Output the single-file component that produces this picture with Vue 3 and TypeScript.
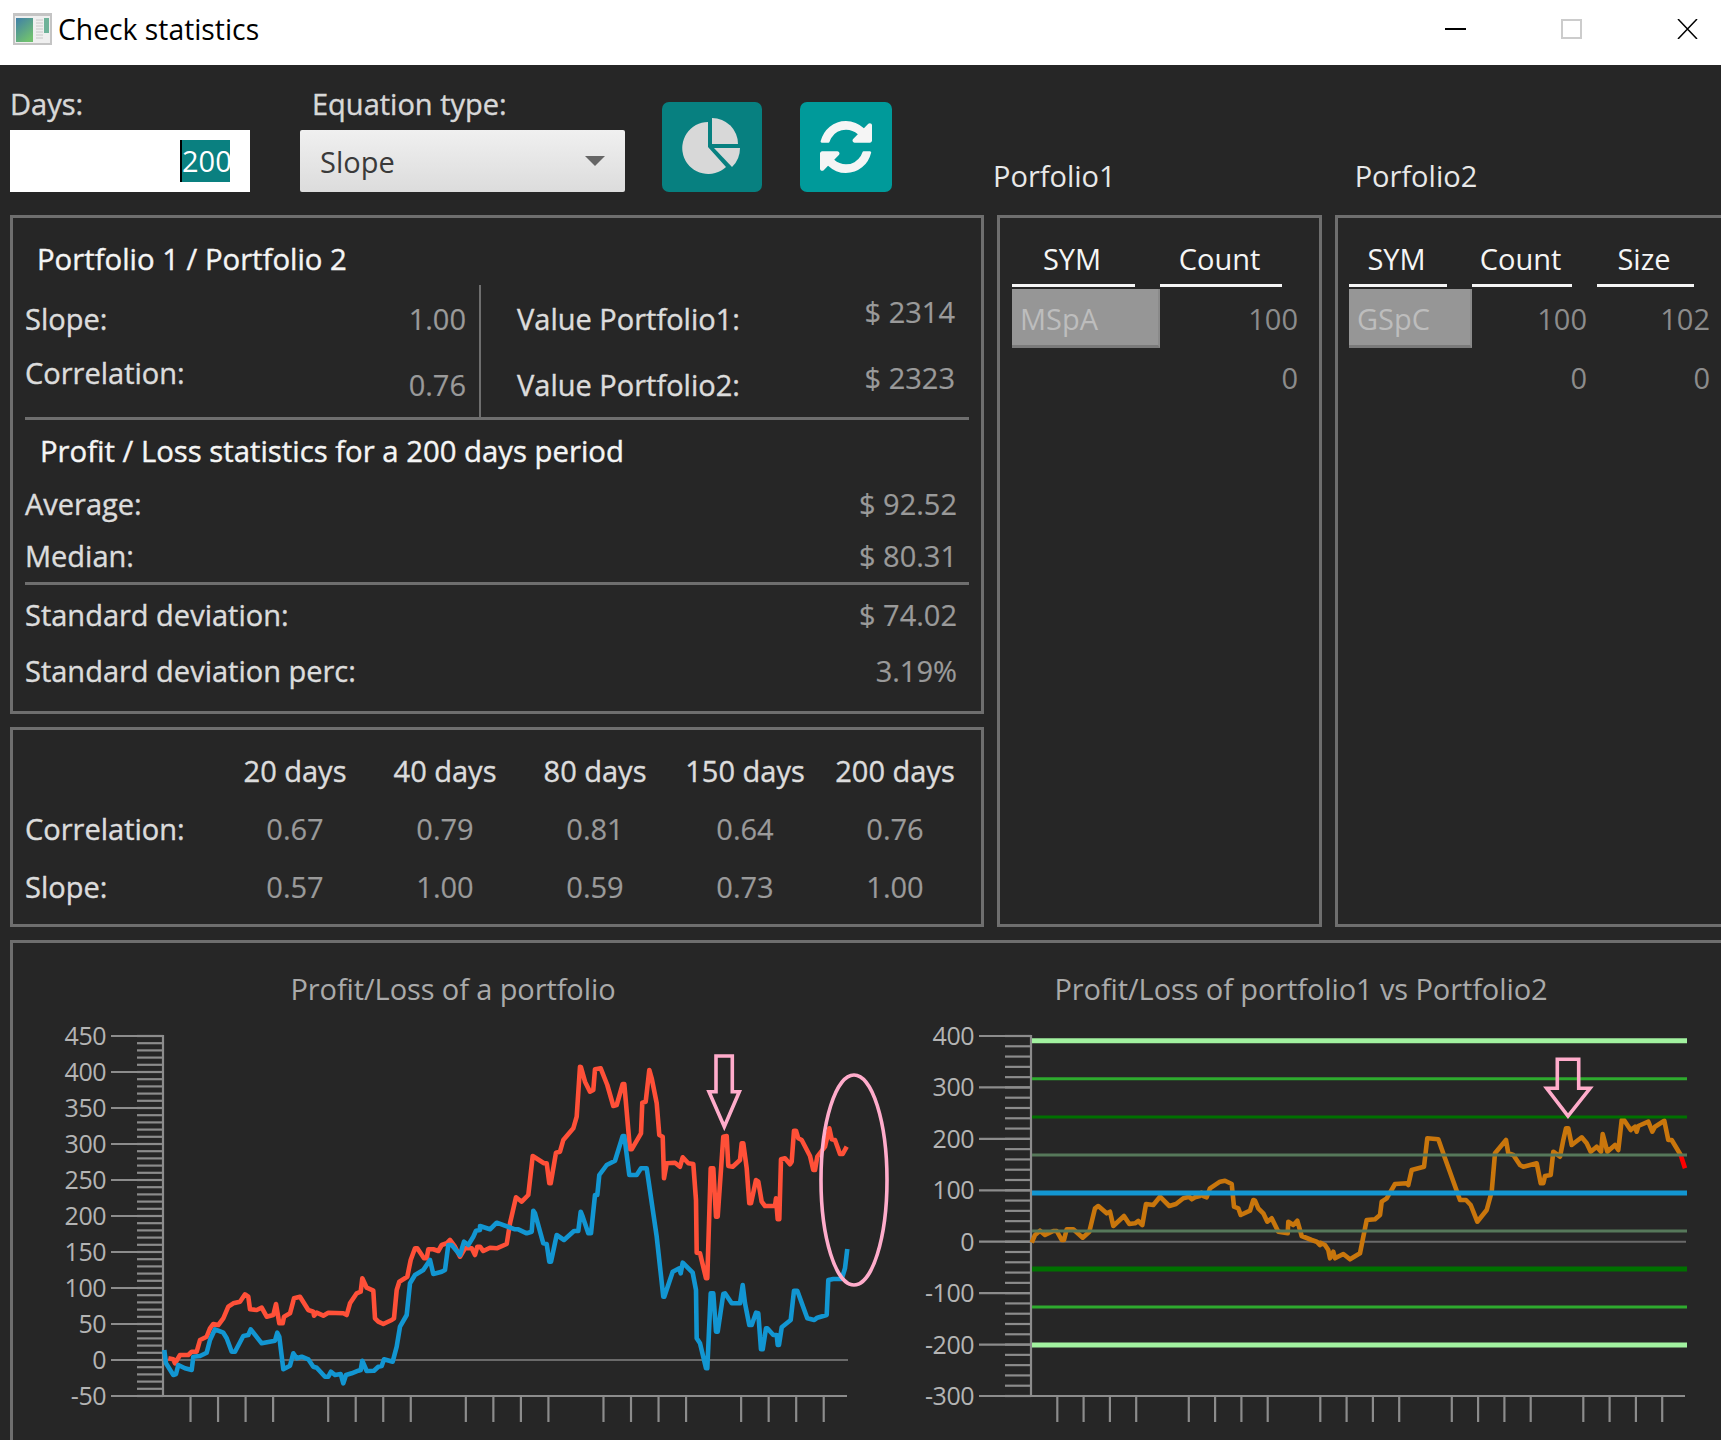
<script setup lang="ts">
type Pt = [number, number]

const z = (pts: Pt[], ox: number, oy = 950): Pt[] => pts.map(([x, y]) => [x / 3 + ox, y / 3 + oy] as Pt)
const d = (pts: Pt[]): string => pts.map(([x, y]) => `${x.toFixed(1)},${y.toFixed(1)}`).join(' ')

const redA: Pt[] = [[505,1225],[520,1228],[525,1240],[540,1215],[565,1215],[575,1205],[590,1205],[600,1170],[620,1160],[630,1135],[640,1122],[655,1125],[670,1105],[685,1070],[700,1060],[720,1055],[735,1033],[745,1040],[750,1078],[770,1080],[785,1073],[800,1100],[820,1095],[828,1062],[838,1120],[848,1120],[852,1100],[870,1090],[882,1045],[900,1040],[925,1080],[940,1085],[942,1097],[950,1088],[970,1097],[985,1088],[1030,1090],[1040,1095],[1050,1060],[1070,1030],[1082,1025],[1087,985],[1100,1013],[1120,1022],[1125,1105],[1135,1115],[1150,1122],[1175,1110],[1182,1105],[1190,1020],[1198,995],[1222,980],[1232,930],[1245,895],[1252,895],[1272,925],[1280,925],[1285,898],[1300,898],[1315,903],[1325,885],[1340,880],[1350,870],[1365,890],[1380,920],[1395,895],[1415,895],[1425,915],[1432,890],[1440,890]]
const redB: Pt[] = [[0,890],[10,903],[30,893],[50,895],[80,882],[90,820],[108,742],[125,755],[145,735],[158,618],[192,640],[200,640],[208,700],[212,700],[228,608],[240,605],[250,570],[280,535],[290,500],[300,350],[303,352],[315,395],[330,425],[340,420],[345,358],[362,355],[382,405],[400,468],[410,465],[428,402],[433,402],[450,598],[455,598],[483,550],[487,458],[497,455],[508,360],[515,385],[530,460],[538,555],[548,560],[552,685],[560,640],[585,638],[600,650],[608,622],[625,640],[640,642],[648,750],[650,908],[660,910],[678,985],[682,985],[692,655],[700,655],[708,800],[713,800],[730,560],[740,558],[745,648],[758,650],[780,630],[785,580],[790,580],[800,655],[808,760],[813,760],[828,690],[835,695],[845,755],[855,768],[885,768],[888,745],[893,808],[898,808],[903,628],[915,625],[930,643],[935,635],[942,542],[948,542],[955,565],[965,570],[990,618],[1000,660],[1005,660],[1012,620],[1035,590],[1048,535],[1055,568],[1065,570],[1080,612],[1088,612],[1100,590]]
const blueA: Pt[] = [[493,1200],[498,1240],[520,1275],[528,1272],[535,1245],[555,1255],[575,1260],[580,1220],[600,1218],[620,1208],[630,1170],[645,1138],[670,1148],[680,1165],[695,1205],[705,1205],[730,1158],[745,1155],[752,1138],[785,1180],[825,1172],[832,1148],[838,1160],[850,1258],[870,1247],[880,1210],[890,1225],[905,1220],[925,1228],[940,1250],[950,1253],[975,1280],[985,1280],[993,1265],[1005,1275],[1022,1272],[1030,1300],[1038,1275],[1055,1270],[1075,1262],[1082,1260],[1087,1232],[1100,1263],[1122,1262],[1135,1250],[1145,1248],[1152,1228],[1178,1235],[1190,1190],[1200,1130],[1220,1095],[1230,1000],[1245,975],[1270,960],[1290,930],[1300,972],[1325,965],[1335,960],[1345,885],[1355,885],[1380,915],[1392,875],[1405,885],[1420,860],[1428,842],[1440,840]]
const blueB: Pt[] = [[0,828],[30,838],[50,818],[105,838],[115,838],[140,850],[155,845],[160,782],[165,790],[190,880],[200,882],[208,935],[213,935],[230,855],[252,870],[282,843],[295,843],[302,785],[308,800],[325,850],[333,850],[345,735],[352,735],[358,675],[380,645],[405,632],[428,558],[433,558],[448,675],[470,675],[483,655],[500,655],[530,860],[550,1040],[553,1040],[578,965],[598,955],[602,970],[608,938],[638,968],[648,1020],[650,1165],[660,1180],[678,1255],[682,1255],[692,1030],[700,1030],[708,1145],[713,1145],[730,1032],[735,1030],[755,1060],[780,1060],[788,1005],[795,1060],[808,1125],[815,1125],[828,1088],[835,1090],[843,1198],[848,1198],[858,1135],[862,1135],[880,1155],[890,1155],[893,1185],[897,1185],[905,1132],[932,1110],[942,1022],[952,1022],[982,1105],[1003,1110],[1012,1103],[1040,1095],[1045,990],[1060,987],[1085,987],[1095,955],[1102,897]]
const orangeA: Pt[] = [[335,878],[345,855],[360,842],[375,855],[400,843],[410,843],[425,870],[432,870],[440,838],[460,838],[488,863],[508,845],[525,775],[535,768],[560,790],[570,785],[580,828],[612,798],[628,822],[645,820],[655,813],[667,825],[678,762],[700,765],[720,740],[748,768],[768,762],[790,745],[808,740],[815,748],[825,742],[840,738],[845,728],[850,738],[860,742],[870,715],[900,695],[915,692],[935,702],[942,770],[955,775],[962,795],[990,782],[1000,750],[1005,752],[1015,775],[1030,790],[1042,815],[1055,805],[1075,845],[1103,850],[1105,815],[1120,825],[1132,812],[1145,858],[1175,870],[1190,875],[1200,885]]
const orangeB: Pt[] = [[0,878],[15,885],[25,900],[30,925],[40,905],[45,925],[70,912],[90,928],[120,910],[140,810],[165,808],[180,795],[185,755],[200,745],[225,702],[260,700],[265,705],[275,660],[312,650],[322,565],[355,568],[375,625],[420,750],[438,750],[452,765],[472,815],[500,780],[515,725],[525,610],[558,570],[565,610],[580,615],[600,645],[610,650],[650,640],[662,700],[670,700],[675,678],[692,675],[700,605],[720,620],[730,570],[738,535],[745,535],[755,585],[785,562],[800,580],[812,605],[830,590],[843,605],[848,552],[862,605],[885,585],[895,600],[905,510],[912,510],[932,540],[945,530],[950,545],[955,528],[985,515],[997,545],[1005,530],[1033,512],[1045,570],[1055,570],[1082,615]]

const redLine = d([...z(redA, 0), ...z(redB, 480)])
const blueLine = d([...z(blueA, 0), ...z(blueB, 480)])
const orangeLine = d([...z(orangeA, 920), ...z(orangeB, 1320)])
const redTail = d(z([[1082, 615], [1095, 655]], 1320))
const arrowLeft = d(z([[708,318],[757,318],[757,425],[778,425],[733,530],[687,425],[708,425]], 480))
const arrowRight = d(z([[712,328],[776,328],[776,415],[810,415],[744,498],[680,415],[712,415]], 1320))

interface Axis { x: number; from: number; to: number; min: number; max: number; step: number; minors: number; xStep: number; end: number; labelX: number; zero: number }
const leftAxis: Axis = { x: 163, from: 1036, to: 1396, min: -50, max: 450, step: 50, minors: 50, xStep: 27.53, end: 847, labelX: 106, zero: 848 }
const rightAxis: Axis = { x: 1031, from: 1036, to: 1396, min: -300, max: 400, step: 100, minors: 35, xStep: 26.3, end: 1685, labelX: 974, zero: 1686 }

const yOf = (a: Axis, v: number): number => a.from + ((a.max - v) / (a.max - a.min)) * (a.to - a.from)
const majors = (a: Axis) => {
  const out: { v: number; y: number }[] = []
  for (let v = a.max; v >= a.min; v -= a.step) out.push({ v, y: yOf(a, v) })
  return out
}
const minorTicks = (a: Axis): number[] =>
  Array.from({ length: a.minors + 1 }, (_, i) => a.from + (i * (a.to - a.from)) / a.minors)
const xTicks = (a: Axis): number[] => {
  const out: number[] = []
  for (let k = 1; k <= 24; k++) if (k % 5 !== 0) out.push(a.x + k * a.xStep)
  return out
}
const axes = [leftAxis, rightAxis]

const bands = [
  { y: 1040.7, w: 5, c: '#a2f2a0' },
  { y: 1078.7, w: 3, c: '#2eaa2e' },
  { y: 1117, w: 3, c: '#007000' },
  { y: 1155, w: 3, c: '#56785a' },
  { y: 1231, w: 3, c: '#56785a' },
  { y: 1269, w: 5, c: '#007000' },
  { y: 1307, w: 3, c: '#2eaa2e' },
  { y: 1345, w: 5, c: '#a2f2a0' },
  { y: 1193, w: 5, c: '#1296d2' }
]

const periods = [
  { title: '20 days', corr: '0.67', slope: '0.57' },
  { title: '40 days', corr: '0.79', slope: '1.00' },
  { title: '80 days', corr: '0.81', slope: '0.59' },
  { title: '150 days', corr: '0.64', slope: '0.73' },
  { title: '200 days', corr: '0.76', slope: '1.00' }
]
</script>

<template>
  <div class="window">
    <header class="titlebar">
      <svg class="appicon" viewBox="0 0 39 32">
        <defs>
          <linearGradient id="appg" x1="0" y1="0" x2="0.6" y2="1">
            <stop offset="0" stop-color="#3f7fa8" />
            <stop offset="1" stop-color="#70c070" />
          </linearGradient>
        </defs>
        <rect x="0" y="0" width="39" height="32" fill="#c4c4c4" />
        <rect x="2" y="3" width="35" height="27" fill="#efefef" />
        <rect x="3" y="5" width="17" height="24" fill="url(#appg)" />
        <rect x="31" y="5" width="5" height="15" fill="#6fb39a" />
        <path d="M23 7h7M23 10h7M23 13h7M23 16h7M23 19h7M23 22h7M23 25h7" stroke="#c8c8c8" stroke-width="1" />
      </svg>
      <span class="apptitle">Check statistics</span>
      <div class="winctl">
        <svg class="ctl" viewBox="0 0 21 20"><path d="M0 10h21" stroke="#000" stroke-width="2" /></svg>
        <svg class="ctl" viewBox="0 0 21 20"><rect x="1" y="1" width="19" height="18" fill="none" stroke="#ccc" stroke-width="2" /></svg>
        <svg class="ctl" viewBox="0 0 21 20"><path d="M1 0l19 20M20 0L1 20" stroke="#000" stroke-width="1.5" fill="none" /></svg>
      </div>
    </header>

    <main class="body">
      <section class="toolbar">
        <div class="field days">
          <label class="flabel">Days:</label>
          <div class="input"><span class="sel">200</span></div>
        </div>
        <div class="field eq">
          <label class="flabel eqlabel">Equation type:</label>
          <div class="combo"><span>Slope</span><i class="caret"></i></div>
        </div>
        <button class="btn btn1" type="button" aria-label="Chart">
          <svg viewBox="0 0 100 90" width="100" height="90">
            <g fill="#d8d8d8">
              <path d="M46 20A26 26 0 1 0 64 65L46 45Z" />
              <path d="M50 16A26 26 0 0 1 76 42L50 42Z" />
              <path d="M52 46L78 46A26 26 0 0 1 70 65Z" />
            </g>
          </svg>
        </button>
        <button class="btn btn2" type="button" aria-label="Refresh">
          <svg viewBox="0 -1408 1536 1536" width="52" height="52">
            <path transform="scale(1,-1)" fill="#f5f5f5" d="M1511 480q0 -5 -1 -7q-64 -268 -268 -434.5t-478 -166.5q-146 0 -282.5 55t-243.5 157l-129 -129q-19 -19 -45 -19t-45 19t-19 45v448q0 26 19 45t45 19h448q26 0 45 -19t19 -45t-19 -45l-137 -137q71 -66 161 -102t187 -36q134 0 250 65t186 179q11 17 53 117q8 23 30 23h192q13 0 22.5 -9.5t9.5 -22.5zM1536 1280v-448q0 -26 -19 -45t-45 -19h-448q-26 0 -45 19t-19 45t19 45l138 138q-148 137 -349 137q-134 0 -250 -65t-186 -179q-11 -17 -53 -117q-8 -23 -30 -23h-199q-13 0 -22.5 9.5t-9.5 22.5v7q65 268 270 434.5t480 166.5q146 0 284 -55.5t245 -156.5l130 129q19 19 45 19t45 -19t19 -45z" />
          </svg>
        </button>
        <span class="pname p1name">Porfolio1</span>
        <span class="pname p2name">Porfolio2</span>
      </section>

      <section class="mid">
        <div class="leftcol">
          <div class="panel stats">
            <div class="h h1">Portfolio 1 / Portfolio 2</div>
            <div class="pair">
              <div class="row cellL"><span class="lab">Slope:</span><span class="val">1.00</span></div>
              <div class="row cellR"><span class="lab">Value Portfolio1:</span><span class="val up7">$ 2314</span></div>
              <div class="row cellL"><span class="lab up12">Correlation:</span><span class="val">0.76</span></div>
              <div class="row cellR"><span class="lab">Value Portfolio2:</span><span class="val up7">$ 2323</span></div>
            </div>
            <hr class="rule" />
            <div class="h h2">Profit / Loss statistics for a 200 days period</div>
            <div class="row wide r52"><span class="lab">Average:</span><span class="val">$ 92.52</span></div>
            <div class="row wide r53"><span class="lab">Median:</span><span class="val">$ 80.31</span></div>
            <hr class="rule" />
            <div class="row wide r58"><span class="lab">Standard deviation:</span><span class="val">$ 74.02</span></div>
            <div class="row wide r54"><span class="lab">Standard deviation perc:</span><span class="val">3.19%</span></div>
          </div>
          <div class="panel periods">
            <span></span>
            <span v-for="p in periods" :key="p.title" class="ph">{{ p.title }}</span>
            <span class="lab">Correlation:</span>
            <span v-for="p in periods" :key="p.title + 'c'" class="pv">{{ p.corr }}</span>
            <span class="lab">Slope:</span>
            <span v-for="p in periods" :key="p.title + 's'" class="pv">{{ p.slope }}</span>
          </div>
        </div>

        <div class="panel tbl tbl1">
          <span class="th">SYM</span><span class="th short">Count</span>
          <span class="cellsel">MSpA</span><span class="td">100</span>
          <span></span><span class="td">0</span>
        </div>

        <div class="panel tbl tbl2">
          <span class="th">SYM</span><span class="th">Count</span><span class="th short">Size</span>
          <span class="cellsel">GSpC</span><span class="td inset">100</span><span class="td">102</span>
          <span></span><span class="td inset">0</span><span class="td">0</span>
        </div>
      </section>

      <section class="panel charts">
        <svg class="chartsvg" viewBox="13 943 1708 497" width="1708" height="497">
          <text class="ctitle" x="453" y="1000" text-anchor="middle">Profit/Loss of a portfolio</text>
          <text class="ctitle" x="1301" y="1000" text-anchor="middle">Profit/Loss of portfolio1 vs Portfolio2</text>

          <g v-for="a in axes" :key="a.x">
            <line :x1="a.x" :x2="a.zero" :y1="yOf(a, 0)" :y2="yOf(a, 0)" stroke="#6a6a6a" stroke-width="2" />
            <line v-for="y in minorTicks(a)" :key="y" :x1="a.x - 26" :x2="a.x" :y1="y" :y2="y" stroke="#8c8c8c" stroke-width="2.2" />
            <g v-for="m in majors(a)" :key="m.v">
              <line :x1="a.x - 52" :x2="a.x" :y1="m.y" :y2="m.y" stroke="#8c8c8c" stroke-width="2.2" />
              <text class="tick" :x="a.labelX" :y="m.y + 9" text-anchor="end">{{ m.v }}</text>
            </g>
            <line :x1="a.x" :x2="a.x" :y1="a.from - 1" :y2="a.to + 1" stroke="#8c8c8c" stroke-width="2.2" />
            <line :x1="a.x" :x2="a.end" :y1="a.to" :y2="a.to" stroke="#8c8c8c" stroke-width="2.2" />
            <line v-for="x in xTicks(a)" :key="x" :x1="x" :x2="x" :y1="a.to" :y2="a.to + 26" stroke="#8c8c8c" stroke-width="2.2" />
          </g>

          <polyline class="ln" :points="redLine" stroke="#ff5038" />
          <polyline class="ln" :points="blueLine" stroke="#1296d2" />

          <polyline class="ln" :points="orangeLine" stroke="#c9760c" />
          <polyline class="ln" :points="redTail" stroke="#ff0000" />
          <line v-for="b in bands" :key="b.y" x1="1032" x2="1687" :y1="b.y" :y2="b.y" :stroke="b.c" :stroke-width="b.w" />

          <polygon class="pink" :points="arrowLeft" />
          <polygon class="pink" :points="arrowRight" />
          <ellipse class="pink" cx="854" cy="1180" rx="33" ry="105" />
        </svg>
      </section>
    </main>
  </div>
</template>

<style>
html, body { margin: 0; background: #262626; }
</style>

<style scoped>
.window {
  width: 1721px;
  height: 1440px;
  overflow: hidden;
  background: #262626;
  font-family: "Open Sans", "Noto Sans", sans-serif;
  font-size: 29px;
  color: #d8d8d8;
}
.titlebar {
  height: 65px;
  box-sizing: border-box;
  padding: 0 0 7px 13px;
  background: #fff;
  display: flex;
  align-items: center;
  color: #000;
}
.appicon { width: 39px; height: 32px; margin-right: 6px; }
.apptitle { font-size: 28.3px; }
.winctl { margin-left: auto; display: flex; gap: 95px; padding-right: 23px; }
.ctl { width: 21px; height: 20px; }

.body { padding-left: 10px; }
.toolbar {
  height: 150px;
  display: flex;
  align-items: flex-end;
}
.field { display: flex; flex-direction: column; margin-bottom: 23px; }
.days { width: 240px; }
.eq { width: 325px; margin-left: 50px; }
.flabel { height: 37px; line-height: 24px; display: block; margin-bottom: 1px; -webkit-text-stroke: 0.4px currentColor; }
.eqlabel { padding-left: 12px; }
.input {
  height: 62px;
  background: #fff;
  display: flex;
  justify-content: flex-end;
  align-items: center;
  padding-right: 20px;
}
.sel {
  background: #0a8080;
  color: #fff;
  height: 42px;
  line-height: 42px;
  width: 50px;
  text-align: center;
  border-left: 2px solid #000;
  box-sizing: border-box;
}
.combo {
  height: 62px;
  background: linear-gradient(#f0f0f0, #dcdcdc);
  border-radius: 2px;
  display: flex;
  align-items: center;
  justify-content: space-between;
  padding: 0 20px;
  color: #3a3a3a;
}
.caret {
  width: 0; height: 0;
  border-left: 10px solid transparent;
  border-right: 10px solid transparent;
  border-top: 10px solid #666;
}
.btn {
  border: 0;
  padding: 0;
  height: 90px;
  border-radius: 7px;
  margin-bottom: 23px;
  display: flex;
  align-items: center;
  justify-content: center;
}
.btn1 { width: 100px; margin-left: 37px; background: #078080; }
.btn2 { width: 92px; margin-left: 38px; background: #009a9a; }
.pname { color: #e8e8e8; margin-bottom: 24px; line-height: 30px; }
.p1name { margin-left: 101px; }
.p2name { margin-left: 239px; }

.mid {
  display: grid;
  grid-template-columns: 974px 325px 400px;
  column-gap: 13px;
  height: 712px;
  box-sizing: border-box;
}
.leftcol { display: flex; flex-direction: column; gap: 13px; }
.panel { border: 3px solid #6e6e6e; box-sizing: border-box; }
.stats { height: 499px; padding: 0 12px; }
.h { color: #f5f5f5; font-size: 29.3px; -webkit-text-stroke: 0.4px currentColor; }
.h1 { height: 66px; padding: 16px 0 0 12px; box-sizing: border-box; line-height: 50px; }
.pair {
  display: grid;
  grid-template-columns: 456px 1fr;
  grid-auto-rows: 66px;
  padding-top: 1px;
}
.row { display: flex; align-items: center; justify-content: space-between; }
.cellL { padding-right: 13px; border-right: 2px solid #6e6e6e; }
.cellR { padding: 0 14px 0 36px; }
.lab { color: #dcdcdc; -webkit-text-stroke: 0.4px currentColor; }
.val { color: #9a9a9a; -webkit-text-stroke: 0.2px currentColor; }
.up7 { margin-bottom: 14px; }
.up12 { margin-bottom: 24px; }
.rule { height: 3px; margin: 0; border: 0; background: #6e6e6e; }
.h2 { height: 57px; padding: 5px 0 0 15px; box-sizing: border-box; line-height: 52px; }
.wide { padding-right: 12px; }
.r52 { height: 52px; }
.r53 { height: 53px; }
.r58 { height: 58px; }
.r54 { height: 54px; }

.periods {
  height: 200px;
  padding: 11px 12px 0;
  display: grid;
  grid-template-columns: 195px repeat(5, 150px);
  grid-auto-rows: 58px;
  align-items: center;
}
.ph { text-align: center; color: #dcdcdc; -webkit-text-stroke: 0.4px currentColor; }
.pv { text-align: center; color: #9a9a9a; -webkit-text-stroke: 0.2px currentColor; }

.tbl { display: grid; align-content: start; grid-template-rows: 71px; grid-auto-rows: 59px; }
.tbl1 { grid-template-columns: 148px 138px; padding-left: 12px; }
.tbl2 { grid-template-columns: 123px 125px 113px; padding-left: 11px; }
.th {
  box-sizing: border-box;
  align-self: end;
  height: 48px;
  margin: 0 25px 2px 0;
  padding-right: 3px;
  border-bottom: 3px solid #f5f5f5;
  color: #f5f5f5;
  text-align: center;
  line-height: 40px;
}
.short { margin-right: 16px; }
.cellsel {
  box-sizing: border-box;
  background: #969696;
  border-right: 2px solid #8a8a8a;
  border-bottom: 3px solid #7a7a7a;
  color: #bdbdbd;
  padding-left: 8px;
  line-height: 60px;
  height: 59px;
}
.td { text-align: right; color: #8c8c8c; line-height: 59px; }
.inset { padding-right: 10px; }

.charts {
  margin-top: 13px;
  width: 1720px;
  height: 520px;
  border-right: 0;
}
.chartsvg { display: block; }
.ctitle { fill: #aaaaaa; font-size: 29px; letter-spacing: -0.1px; }
.tick { fill: #b4b4b4; font-size: 25px; letter-spacing: -0.5px; }
.ln { fill: none; stroke-width: 4.6; stroke-linejoin: round; stroke-linecap: butt; }
.pink { fill: none; stroke: #ffaccb; stroke-width: 3.6; }
</style>
